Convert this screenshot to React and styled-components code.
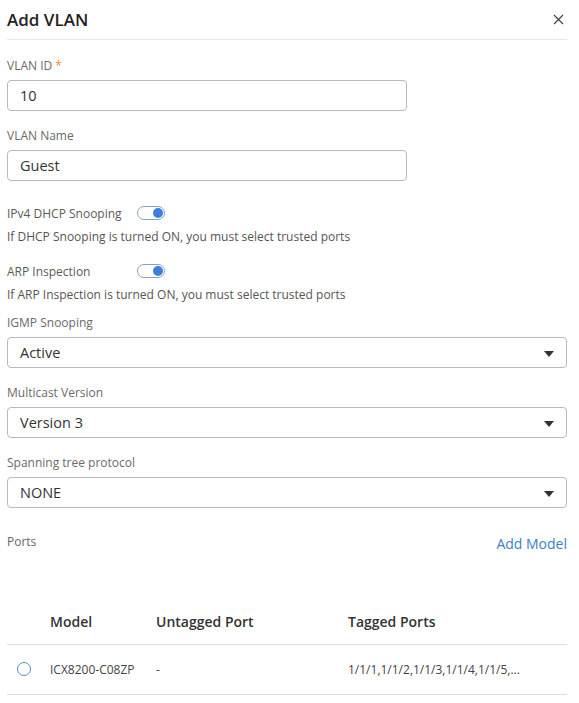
import React from "react";
import styled, { createGlobalStyle } from "styled-components";

const Global = createGlobalStyle`
  body {
    margin: 0;
    background: #fff;
    font-family: "Open Sans", "Noto Sans", sans-serif;
    color: #333;
  }
  * { box-sizing: border-box; }
`;

const App = () => {
  return (
    <>
      <Global />
      <Panel>
        <Header>
          <Title>Add VLAN</Title>
          <Close aria-label="close">
            <svg width="11" height="11" viewBox="0 0 11 11">
              <path d="M1 1L10 10M10 1L1 10" stroke="#444" strokeWidth="1.2" />
            </svg>
          </Close>
        </Header>

        <Label $top={18}>
          VLAN ID <Req>*</Req>
        </Label>
        <Input $narrow value="10" readOnly />

        <Label $top={17}>VLAN Name</Label>
        <Input $narrow value="Guest" readOnly />

        <ToggleRow $top={24}>
          <ToggleLabel>IPv4 DHCP Snooping</ToggleLabel>
          <Toggle $on />
        </ToggleRow>
        <Help>If DHCP Snooping is turned ON, you must select trusted ports</Help>

        <ToggleRow $top={18}>
          <ToggleLabel>ARP Inspection</ToggleLabel>
          <Toggle $on />
        </ToggleRow>
        <Help>If ARP Inspection is turned ON, you must select trusted ports</Help>

        <Label $top={12}>IGMP Snooping</Label>
        <Select>
          <span>Active</span>
          <Caret />
        </Select>

        <Label $top={17}>Multicast Version</Label>
        <Select>
          <span>Version 3</span>
          <Caret />
        </Select>

        <Label $top={17}>Spanning tree protocol</Label>
        <Select>
          <span>NONE</span>
          <Caret />
        </Select>

        <PortsBar>
          <PortsLabel>Ports</PortsLabel>
          <LinkButton>Add Model</LinkButton>
        </PortsBar>

        <Table>
          <thead>
            <tr>
              <Th $w={43} />
              <Th $w={106}>Model</Th>
              <Th $w={192}>Untagged Port</Th>
              <Th>Tagged Ports</Th>
            </tr>
          </thead>
          <tbody>
            <tr>
              <Td>
                <Radio />
              </Td>
              <Td>ICX8200-C08ZP</Td>
              <Td>-</Td>
              <Td>1/1/1,1/1/2,1/1/3,1/1/4,1/1/5,...</Td>
            </tr>
          </tbody>
        </Table>
      </Panel>
    </>
  );
};

export default App;

const Panel = styled.div`
  width: 579px;
  padding: 0 12px 0 7px;
`;

const Header = styled.div`
  height: 40px;
  display: flex;
  align-items: center;
  justify-content: space-between;
  border-bottom: 1px solid #e6e6e6;
  padding-bottom: 1px;
`;

const Title = styled.h1`
  margin: 0;
  font-size: 17px;
  font-weight: 600;
  color: #222;
`;

const Close = styled.button`
  border: none;
  background: none;
  padding: 0;
  margin-right: 3px;
  display: flex;
  cursor: pointer;
`;

const Label = styled.div`
  margin-top: ${(p) => p.$top}px;
  margin-bottom: 6px;
  font-size: 12px;
  line-height: 16px;
  color: #6a6a6a;
`;

const Req = styled.span`
  color: #f08a24;
`;

const Input = styled.input`
  display: block;
  width: ${(p) => (p.$narrow ? "400px" : "100%")};
  height: 31px;
  padding: 0 12px;
  border: 1px solid #b9b9b9;
  border-radius: 4px;
  font-family: inherit;
  font-size: 14.5px;
  color: #333;
  outline: none;
`;

const ToggleRow = styled.div`
  margin-top: ${(p) => p.$top}px;
  display: flex;
  align-items: center;
  height: 16px;
`;

const ToggleLabel = styled.span`
  width: 130px;
  font-size: 12px;
  color: #5a5a5a;
`;

const Toggle = styled.span`
  position: relative;
  width: 28px;
  height: 14px;
  border-radius: 7px;
  border: 1px solid #8aa3c2;
  background: #fff;
  &::after {
    content: "";
    position: absolute;
    top: 1px;
    left: ${(p) => (p.$on ? "15px" : "1px")};
    width: 10px;
    height: 10px;
    border-radius: 50%;
    background: #3d7fdc;
  }
`;

const Help = styled.div`
  margin-top: 8px;
  font-size: 12px;
  line-height: 16px;
  color: #555;
`;

const Select = styled.div`
  height: 31px;
  display: flex;
  align-items: center;
  justify-content: space-between;
  padding: 0 12px 0 12px;
  border: 1px solid #b9b9b9;
  border-radius: 4px;
  font-size: 14.5px;
  color: #333;
`;

const Caret = styled.span`
  width: 0;
  height: 0;
  border-left: 5.5px solid transparent;
  border-right: 5.5px solid transparent;
  border-top: 6px solid #333;
  margin-top: 2px;
`;

const PortsBar = styled.div`
  margin-top: 26px;
  display: flex;
  justify-content: space-between;
  align-items: center;
  height: 18px;
`;

const PortsLabel = styled.span`
  font-size: 12px;
  color: #666;
  margin-top: -3px;
`;

const LinkButton = styled.button`
  border: none;
  background: none;
  padding: 0;
  font-family: inherit;
  font-size: 14px;
  color: #3b7fc4;
  cursor: pointer;
`;

const Table = styled.table`
  margin-top: 48px;
  width: 100%;
  border-collapse: collapse;
`;

const Th = styled.th`
  width: ${(p) => (p.$w ? `${p.$w}px` : "auto")};
  height: 44px;
  text-align: left;
  padding: 0;
  font-size: 14px;
  font-weight: 600;
  color: #333;
  border-bottom: 1px solid #dcdcdc;
`;

const Td = styled.td`
  height: 50px;
  padding: 0;
  font-size: 12px;
  color: #444;
  border-bottom: 1px solid #dcdcdc;
  vertical-align: middle;
`;

const Radio = styled.span`
  display: block;
  margin-left: 10px;
  width: 14px;
  height: 14px;
  border-radius: 50%;
  border: 1px solid #5a8fc9;
`;
